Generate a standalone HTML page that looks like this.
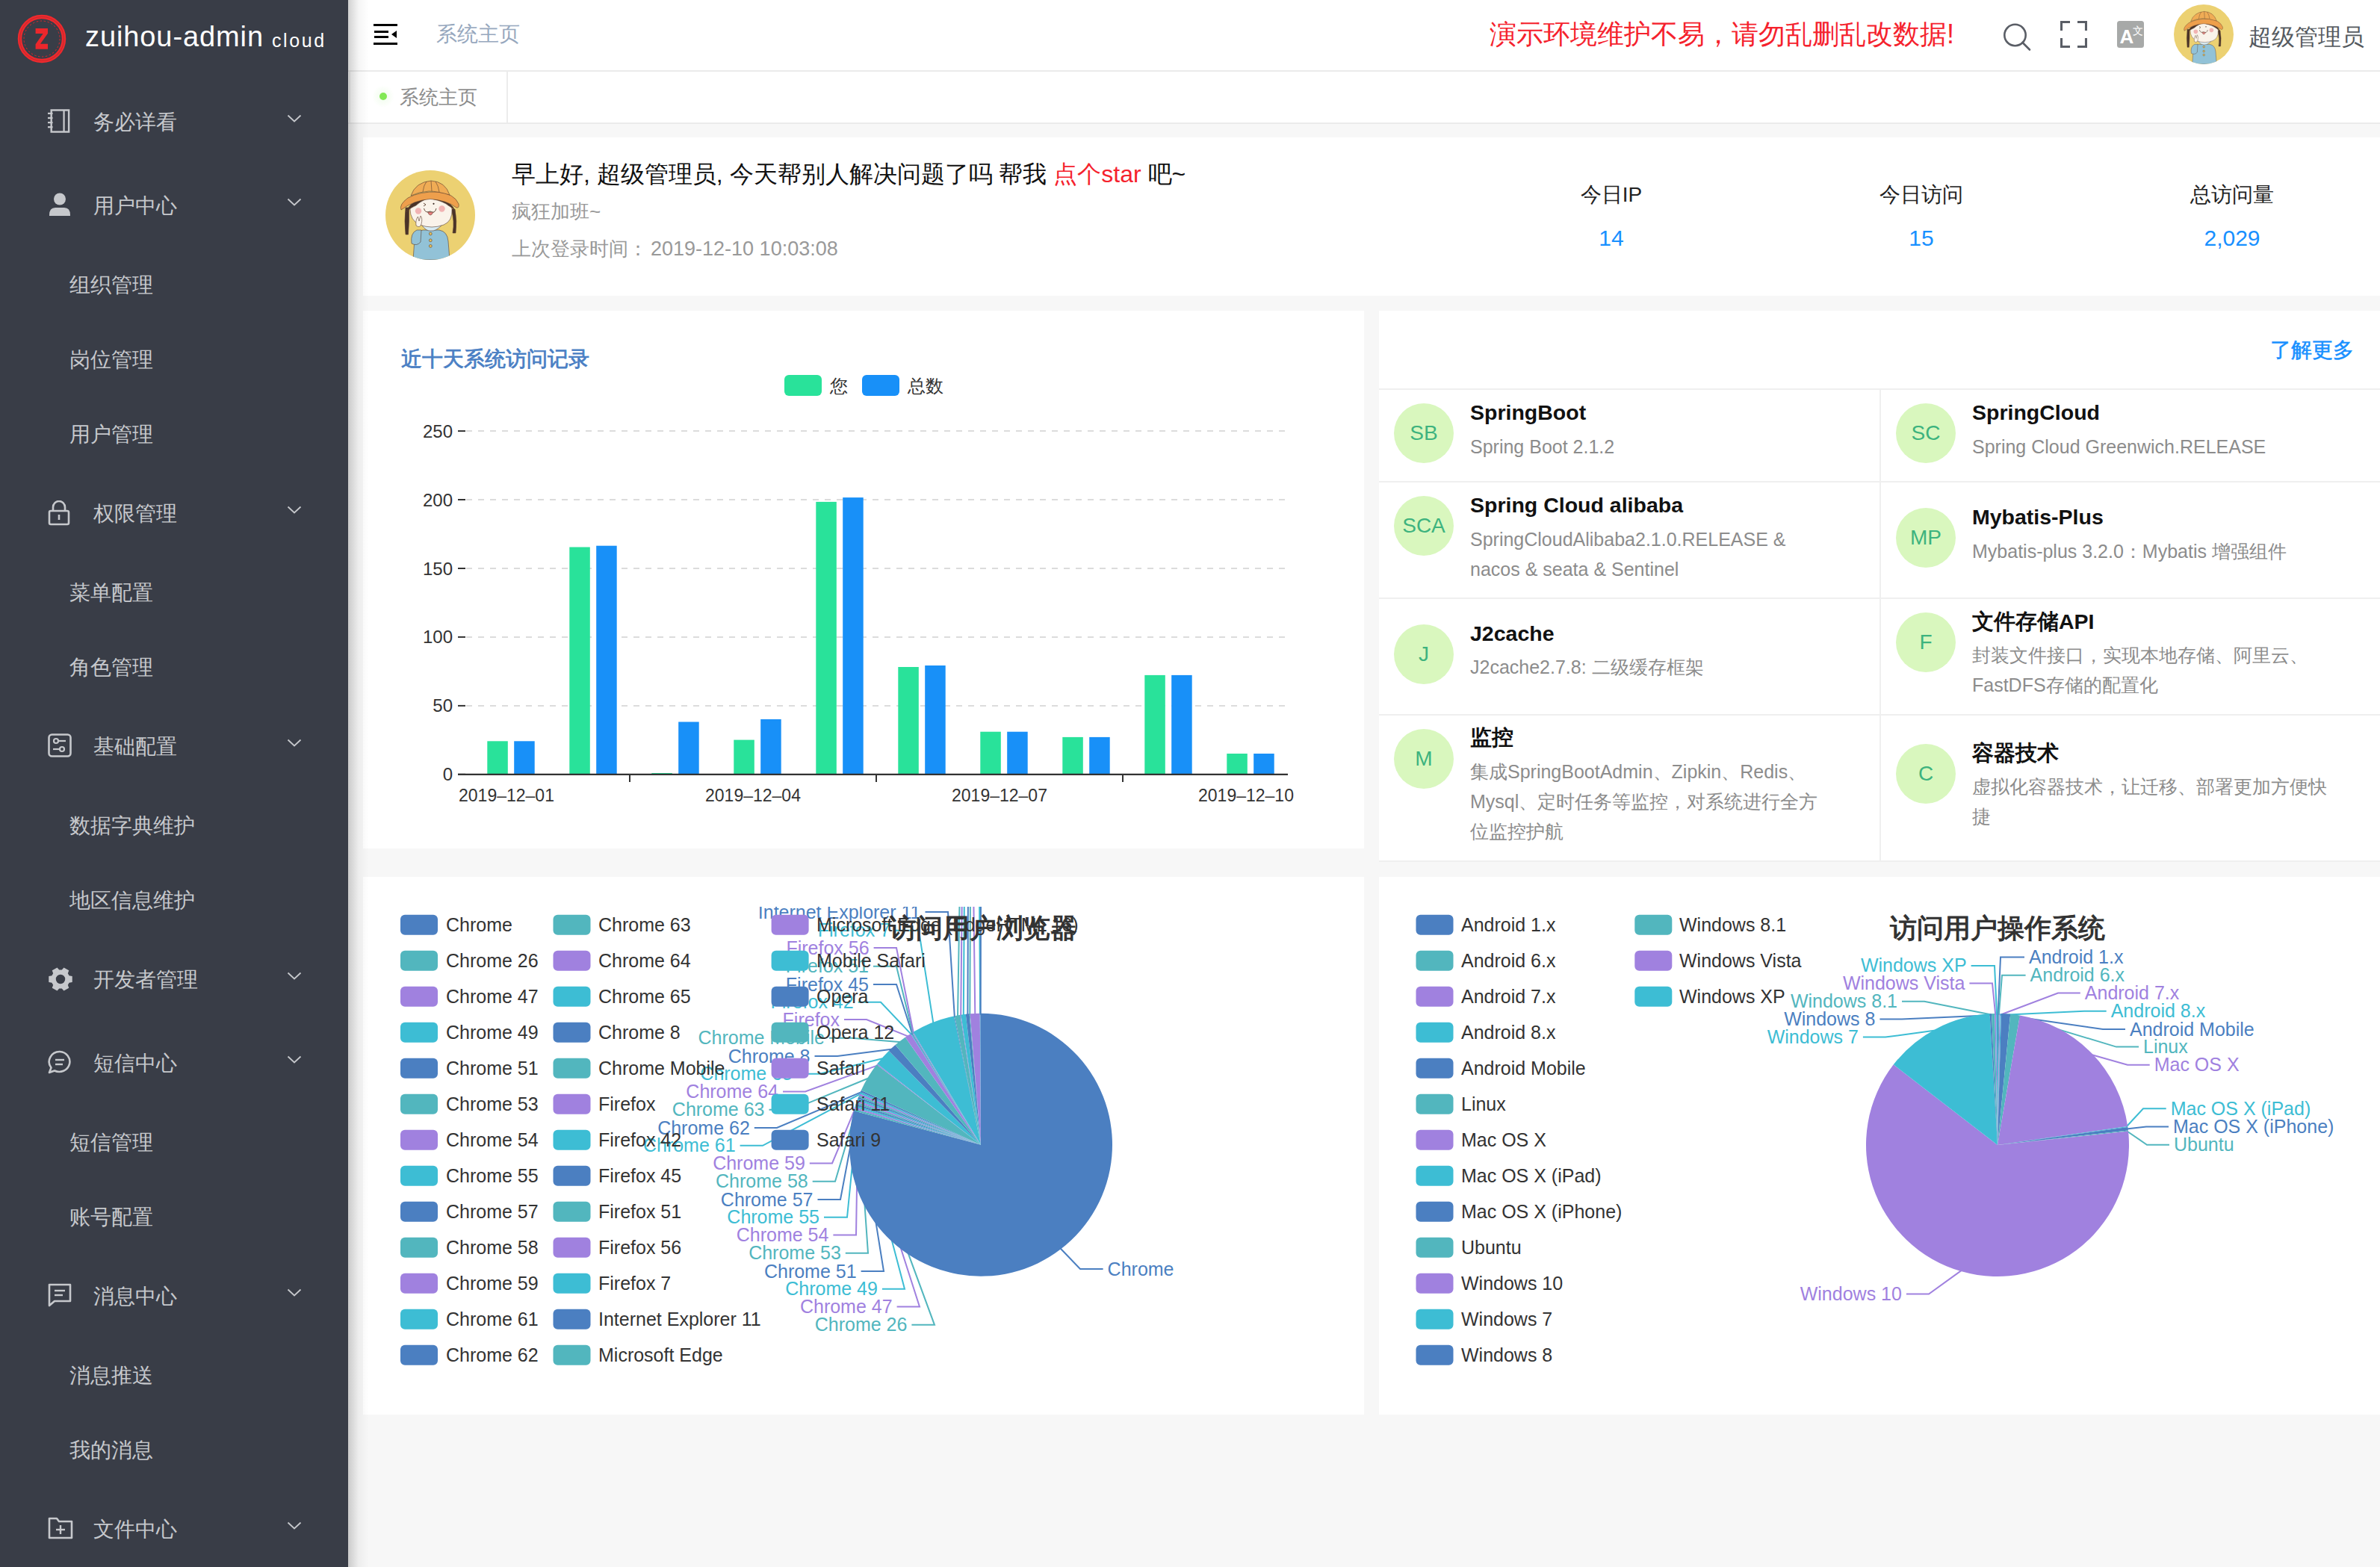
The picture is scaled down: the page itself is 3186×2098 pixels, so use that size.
<!DOCTYPE html><html><head><meta charset="utf-8"><style>
*{box-sizing:border-box;margin:0;padding:0}
html,body{width:3186px;height:2098px;overflow:hidden}
body{position:relative;background:#f7f7f7;font-family:"Liberation Sans",sans-serif;color:#333}
.a{position:absolute;white-space:nowrap}
#side{position:absolute;left:0;top:0;width:466px;height:2098px;background:#393d47;z-index:5}
.mt{position:absolute;color:#c6c8cc;font-size:28px;line-height:28px;white-space:nowrap}
#hdr{position:absolute;left:466px;top:0;width:2720px;height:96px;background:#fff;border-bottom:2px solid #ebebeb}
#tabs{position:absolute;left:466px;top:96px;width:2720px;height:70px;background:#fff;border-bottom:2px solid #ebebeb}
#shadow{position:absolute;left:466px;top:0;width:28px;height:2098px;background:linear-gradient(to right,rgba(0,0,0,.18),rgba(0,0,0,.04) 50%,rgba(0,0,0,0));z-index:4}
.card{position:absolute;background:#fff}
</style></head><body>
<div id="side">
<svg class="a" style="left:0px;top:0px" width="120" height="110" viewBox="0 0 120 110">
<circle cx="56" cy="52" r="29.5" fill="none" stroke="#ee2a2e" stroke-width="5.5"/>
<circle cx="56" cy="52" r="29.5" fill="none" stroke="#b0282c" stroke-width="1.2" opacity=".6"/>
<circle cx="56" cy="52" r="24" fill="none" stroke="#d8282c" stroke-width="1" stroke-dasharray="2.5 2.5"/>
<path d="M47.6 38 H64 V44.8 L54 58.8 H64 V65.7 H47.6 V59.2 L57.6 45 H47.6 Z" fill="#ec272c"/>
</svg>
<div class="a" style="left:114px;top:26px;color:#fff;font-size:38px;line-height:46px;letter-spacing:0.9px">zuihou-admin</div>
<div class="a" style="left:364px;top:39px;color:#fff;font-size:25px;line-height:30px;letter-spacing:2.6px">cloud</div>
<div class="mt" style="left:125px;top:150px">务必详看</div>
<div class="a" style="left:64px;top:146px"><svg width="30" height="32" viewBox="0 0 32 34"><rect x="5" y="1.5" width="25" height="31" fill="none" stroke="#c6c8cc" stroke-width="2.6"/><line x1="23" y1="2" x2="23" y2="32" stroke="#c6c8cc" stroke-width="2.4"/><g fill="#c6c8cc"><rect x="0" y="5" width="7" height="2.4"/><rect x="0" y="11.5" width="7" height="2.4"/><rect x="0" y="18" width="7" height="2.4"/><rect x="0" y="24.5" width="7" height="2.4"/></g></svg></div>
<div class="a" style="left:384px;top:151px"><svg width="20" height="12" viewBox="0 0 20 12"><path d="M1.5 1.5 L10 9.5 L18.5 1.5" fill="none" stroke="#c6c8cc" stroke-width="1.8"/></svg></div>
<div class="mt" style="left:125px;top:262px">用户中心</div>
<div class="a" style="left:64px;top:258px"><svg width="30" height="32" viewBox="0 0 30 32"><circle cx="16" cy="8.5" r="8" fill="#c6c8cc"/><path d="M2 30 Q2 20 10 20 H22 Q30 20 30 30 V31 H2 Z" fill="#c6c8cc"/></svg></div>
<div class="a" style="left:384px;top:263px"><svg width="20" height="12" viewBox="0 0 20 12"><path d="M1.5 1.5 L10 9.5 L18.5 1.5" fill="none" stroke="#c6c8cc" stroke-width="1.8"/></svg></div>
<div class="mt" style="left:93px;top:368px">组织管理</div>
<div class="mt" style="left:93px;top:468px">岗位管理</div>
<div class="mt" style="left:93px;top:568px">用户管理</div>
<div class="mt" style="left:125px;top:674px">权限管理</div>
<div class="a" style="left:64px;top:670px"><svg width="30" height="34" viewBox="0 0 30 34"><path d="M7 14 V9 A8 8 0 0 1 23 9 V14" fill="none" stroke="#c6c8cc" stroke-width="2.6"/><rect x="2" y="14" width="26" height="18" rx="2" fill="none" stroke="#c6c8cc" stroke-width="2.6"/><rect x="13.7" y="19" width="2.6" height="7" fill="#c6c8cc"/></svg></div>
<div class="a" style="left:384px;top:675px"><svg width="20" height="12" viewBox="0 0 20 12"><path d="M1.5 1.5 L10 9.5 L18.5 1.5" fill="none" stroke="#c6c8cc" stroke-width="1.8"/></svg></div>
<div class="mt" style="left:93px;top:780px">菜单配置</div>
<div class="mt" style="left:93px;top:880px">角色管理</div>
<div class="mt" style="left:125px;top:986px">基础配置</div>
<div class="a" style="left:64px;top:982px"><svg width="32" height="32" viewBox="0 0 32 32"><rect x="1.5" y="1.5" width="29" height="29" rx="4" fill="none" stroke="#c6c8cc" stroke-width="2.6"/><circle cx="11" cy="10" r="3" fill="none" stroke="#c6c8cc" stroke-width="2.2"/><circle cx="19" cy="21" r="3" fill="none" stroke="#c6c8cc" stroke-width="2.2"/><line x1="14" y1="10" x2="24" y2="10" stroke="#c6c8cc" stroke-width="2.2"/><line x1="7" y1="21" x2="16" y2="21" stroke="#c6c8cc" stroke-width="2.2"/></svg></div>
<div class="a" style="left:384px;top:987px"><svg width="20" height="12" viewBox="0 0 20 12"><path d="M1.5 1.5 L10 9.5 L18.5 1.5" fill="none" stroke="#c6c8cc" stroke-width="1.8"/></svg></div>
<div class="mt" style="left:93px;top:1092px">数据字典维护</div>
<div class="mt" style="left:93px;top:1192px">地区信息维护</div>
<div class="mt" style="left:125px;top:1298px">开发者管理</div>
<div class="a" style="left:64px;top:1294px"><svg width="34" height="34" viewBox="0 0 34 34"><path fill="#c6c8cc" fill-rule="evenodd" d="M28.59 12.32 L32.72 13.08 L32.72 20.92 L28.59 21.68 L26.85 24.70 L28.25 28.65 L21.47 32.57 L18.74 29.38 L15.26 29.38 L12.53 32.57 L5.75 28.65 L7.15 24.70 L5.41 21.68 L1.28 20.92 L1.28 13.08 L5.41 12.32 L7.15 9.30 L5.75 5.35 L12.53 1.43 L15.26 4.62 L18.74 4.62 L21.47 1.43 L28.25 5.35 L26.85 9.30 Z M23.2 17 A6.2 6.2 0 1 0 10.8 17 A6.2 6.2 0 1 0 23.2 17 Z"/></svg></div>
<div class="a" style="left:384px;top:1299px"><svg width="20" height="12" viewBox="0 0 20 12"><path d="M1.5 1.5 L10 9.5 L18.5 1.5" fill="none" stroke="#c6c8cc" stroke-width="1.8"/></svg></div>
<div class="mt" style="left:125px;top:1410px">短信中心</div>
<div class="a" style="left:64px;top:1406px"><svg width="32" height="32" viewBox="0 0 32 32"><path d="M16 2 A14 13.5 0 1 1 9 27.5 L2 30 L4.5 23.5 A14 13.5 0 0 1 16 2 Z" fill="none" stroke="#c6c8cc" stroke-width="2.6" stroke-linejoin="round"/><line x1="10" y1="13" x2="22" y2="13" stroke="#c6c8cc" stroke-width="2.4"/><line x1="10" y1="19" x2="20" y2="19" stroke="#c6c8cc" stroke-width="2.4"/></svg></div>
<div class="a" style="left:384px;top:1411px"><svg width="20" height="12" viewBox="0 0 20 12"><path d="M1.5 1.5 L10 9.5 L18.5 1.5" fill="none" stroke="#c6c8cc" stroke-width="1.8"/></svg></div>
<div class="mt" style="left:93px;top:1516px">短信管理</div>
<div class="mt" style="left:93px;top:1616px">账号配置</div>
<div class="mt" style="left:125px;top:1722px">消息中心</div>
<div class="a" style="left:64px;top:1718px"><svg width="32" height="32" viewBox="0 0 32 32"><path d="M2 2 H30 V24 H9 L2 30 Z" fill="none" stroke="#c6c8cc" stroke-width="2.6" stroke-linejoin="round"/><line x1="9" y1="10" x2="23" y2="10" stroke="#c6c8cc" stroke-width="2.4"/><line x1="9" y1="16" x2="20" y2="16" stroke="#c6c8cc" stroke-width="2.4"/></svg></div>
<div class="a" style="left:384px;top:1723px"><svg width="20" height="12" viewBox="0 0 20 12"><path d="M1.5 1.5 L10 9.5 L18.5 1.5" fill="none" stroke="#c6c8cc" stroke-width="1.8"/></svg></div>
<div class="mt" style="left:93px;top:1828px">消息推送</div>
<div class="mt" style="left:93px;top:1928px">我的消息</div>
<div class="mt" style="left:125px;top:2034px">文件中心</div>
<div class="a" style="left:64px;top:2030px"><svg width="34" height="32" viewBox="0 0 34 32"><path d="M2 3 H12 L15 7 H32 V29 H2 Z" fill="none" stroke="#c6c8cc" stroke-width="2.6" stroke-linejoin="round"/><line x1="17" y1="12" x2="17" y2="24" stroke="#c6c8cc" stroke-width="2.4"/><line x1="11" y1="18" x2="23" y2="18" stroke="#c6c8cc" stroke-width="2.4"/></svg></div>
<div class="a" style="left:384px;top:2035px"><svg width="20" height="12" viewBox="0 0 20 12"><path d="M1.5 1.5 L10 9.5 L18.5 1.5" fill="none" stroke="#c6c8cc" stroke-width="1.8"/></svg></div>
</div>
<div id="hdr"></div><div id="tabs"></div><div id="shadow"></div>
<svg class="a" style="left:500px;top:32px;z-index:6" width="32" height="28" viewBox="0 0 32 28"><g fill="#000"><rect x="0" y="0" width="32" height="3"/><rect x="1" y="9" width="19" height="3"/><rect x="1" y="16" width="19" height="3"/><rect x="0" y="25" width="32" height="3"/><path d="M24 14 L31 9 V19 Z"/></g></svg>
<div class="a" style="left:584px;top:32px;font-size:28px;line-height:28px;color:#97a8be;z-index:6">系统主页</div>
<div class="a" style="left:1994px;top:28px;font-size:36px;line-height:36px;color:#f5222d;z-index:6">演示环境维护不易，请勿乱删乱改数据!</div>
<svg class="a" style="left:2680px;top:30px;z-index:6" width="42" height="40" viewBox="0 0 42 40"><circle cx="17.5" cy="17" r="14.2" fill="none" stroke="#5a5e66" stroke-width="2.6"/><line x1="27.5" y1="27" x2="37" y2="36.5" stroke="#5a5e66" stroke-width="2.6" stroke-linecap="round"/></svg>
<svg class="a" style="left:2758px;top:28px;z-index:6" width="36" height="36" viewBox="0 0 36 36"><g fill="none" stroke="#5a5e66" stroke-width="3.1"><path d="M1.5 13 V1.5 H13"/><path d="M23 1.5 H34.5 V13"/><path d="M34.5 23 V34.5 H23"/><path d="M13 34.5 H1.5 V23"/></g></svg>
<svg class="a" style="left:2834px;top:28px;z-index:6" width="36" height="36" viewBox="0 0 36 36"><rect x="0" y="0" width="36" height="36" rx="3.5" fill="#a7a9a8"/><text x="3.5" y="29.5" font-family="Liberation Sans" font-weight="bold" font-size="26" fill="#fff">A</text><text x="20.5" y="18" font-size="13.5" fill="#fff">文</text></svg>
<svg class="a"  style="z-index:6;left:2910.0px;top:6.0px" width="80" height="80" viewBox="0 0 120 120">
<defs><clipPath id="cp2950"><circle cx="60" cy="60" r="60"/></clipPath></defs>
<circle cx="60" cy="60" r="60" fill="#ecd172"/>
<g clip-path="url(#cp2950)" stroke="#5a4030" stroke-width="0.6">
<path d="M27 50 Q25 68 27 86 L30.5 86 Q32 68 31.5 50Z" fill="#4a3328"/>
<path d="M88 52 Q93 68 90 84 L94 84 Q96 68 93 52Z" fill="#4a3328"/>
<path d="M37 120 L39 92 Q40 82 50 80 H72 Q83 82 84 95 L86 120Z" fill="#92c2d7"/>
<path d="M35 98 Q33 84 42 80 L48 80 L47 96 Q42 102 35 98Z" fill="#92c2d7"/>
<path d="M49 74 Q55 82 61 81 Q67 82 75 74 L73 72 H51Z" fill="#d7ebf4"/>
<circle cx="60.3" cy="85" r="1.9" fill="#e9c35d"/><circle cx="60.3" cy="93.8" r="1.9" fill="#e9c35d"/><circle cx="60.3" cy="101.4" r="1.9" fill="#e9c35d"/>
<path d="M33 52 Q33 36 60 34 Q88 36 89 52 Q90 68 78 73 Q62 79 46 73 Q33 67 33 52Z" fill="#faf3ea"/>
<path d="M28 56 Q32 41 54 38.6 Q45 43 41 47 Q33 50 28 56Z" fill="#4a3328"/><path d="M93 55 Q90 41 64 38.6 Q78 42 84 47 Q90 50 93 55Z" fill="#4a3328"/>
<path d="M21 53 Q18 46 30 37 Q46 28 70 29 Q92 31 98 45 Q99 51 95 50 Q82 40 60 38.5 Q38 40 21 53Z" fill="#ee9f4c"/>
<path d="M34 34 Q40 16 61 14 Q80 15 86 33 Q70 28 58 28 Q44 29 34 34Z" fill="#f0ac55"/>
<path d="M50 29 Q51 20 55 15 M62 28 L61 14 M72 29 Q71 21 67 15" fill="none"/>
<circle cx="44" cy="54.5" r="4.2" fill="#f1b3b3" stroke="none"/><circle cx="75.5" cy="51.5" r="4.2" fill="#f1b3b3" stroke="none"/>
<path d="M51 44 L54 46 L51 48" fill="none" stroke-width="0.9"/><circle cx="64.5" cy="44.8" r="1.1" fill="#3a2a22" stroke="none"/>
<path d="M51.5 51 Q53 58 60 55 Q66 59 68 51" fill="none" stroke-width="0.9"/>
<path d="M56.5 56 Q60 64 64 56Z" fill="#ec8080" stroke-width="0.6"/>
<path d="M41 74 Q40 66 43.5 62 L45 68 L47 61 Q50 64 48 72 Q46 78 41 74Z" fill="#faf3ea"/>
</g></svg>
<div class="a" style="left:3010px;top:34px;font-size:31px;line-height:32px;color:#555a60;z-index:6">超级管理员</div>
<div class="a" style="left:467px;top:96px;width:2px;height:68px;background:rgba(0,0,0,.06);z-index:6"></div>
<div class="a" style="left:498px;top:114px;width:30px;height:30px;border-radius:50%;background:radial-gradient(circle,rgba(126,232,85,.12),rgba(126,232,85,0) 70%);z-index:6"></div>
<div class="a" style="left:508px;top:124px;width:10px;height:10px;border-radius:50%;background:#82e855;z-index:6"></div>
<div class="a" style="left:535px;top:117px;font-size:26px;line-height:26px;color:#8c8c8c;z-index:6">系统主页</div>
<div class="a" style="left:678px;top:96px;width:2px;height:68px;background:#ececec;z-index:6"></div>
<div class="card" style="left:486px;top:184px;width:2700px;height:212px"></div>
<svg class="a" style="left:516.0px;top:228.0px" width="120" height="120" viewBox="0 0 120 120">
<defs><clipPath id="cp576"><circle cx="60" cy="60" r="60"/></clipPath></defs>
<circle cx="60" cy="60" r="60" fill="#ecd172"/>
<g clip-path="url(#cp576)" stroke="#5a4030" stroke-width="0.6">
<path d="M27 50 Q25 68 27 86 L30.5 86 Q32 68 31.5 50Z" fill="#4a3328"/>
<path d="M88 52 Q93 68 90 84 L94 84 Q96 68 93 52Z" fill="#4a3328"/>
<path d="M37 120 L39 92 Q40 82 50 80 H72 Q83 82 84 95 L86 120Z" fill="#92c2d7"/>
<path d="M35 98 Q33 84 42 80 L48 80 L47 96 Q42 102 35 98Z" fill="#92c2d7"/>
<path d="M49 74 Q55 82 61 81 Q67 82 75 74 L73 72 H51Z" fill="#d7ebf4"/>
<circle cx="60.3" cy="85" r="1.9" fill="#e9c35d"/><circle cx="60.3" cy="93.8" r="1.9" fill="#e9c35d"/><circle cx="60.3" cy="101.4" r="1.9" fill="#e9c35d"/>
<path d="M33 52 Q33 36 60 34 Q88 36 89 52 Q90 68 78 73 Q62 79 46 73 Q33 67 33 52Z" fill="#faf3ea"/>
<path d="M28 56 Q32 41 54 38.6 Q45 43 41 47 Q33 50 28 56Z" fill="#4a3328"/><path d="M93 55 Q90 41 64 38.6 Q78 42 84 47 Q90 50 93 55Z" fill="#4a3328"/>
<path d="M21 53 Q18 46 30 37 Q46 28 70 29 Q92 31 98 45 Q99 51 95 50 Q82 40 60 38.5 Q38 40 21 53Z" fill="#ee9f4c"/>
<path d="M34 34 Q40 16 61 14 Q80 15 86 33 Q70 28 58 28 Q44 29 34 34Z" fill="#f0ac55"/>
<path d="M50 29 Q51 20 55 15 M62 28 L61 14 M72 29 Q71 21 67 15" fill="none"/>
<circle cx="44" cy="54.5" r="4.2" fill="#f1b3b3" stroke="none"/><circle cx="75.5" cy="51.5" r="4.2" fill="#f1b3b3" stroke="none"/>
<path d="M51 44 L54 46 L51 48" fill="none" stroke-width="0.9"/><circle cx="64.5" cy="44.8" r="1.1" fill="#3a2a22" stroke="none"/>
<path d="M51.5 51 Q53 58 60 55 Q66 59 68 51" fill="none" stroke-width="0.9"/>
<path d="M56.5 56 Q60 64 64 56Z" fill="#ec8080" stroke-width="0.6"/>
<path d="M41 74 Q40 66 43.5 62 L45 68 L47 61 Q50 64 48 72 Q46 78 41 74Z" fill="#faf3ea"/>
</g></svg>
<div class="a" style="left:685px;top:217px;font-size:32px;line-height:32px;color:#111">早上好, 超级管理员, 今天帮别人解决问题了吗 帮我 <span style="color:#f5222d">点个star</span> 吧~</div>
<div class="a" style="left:685px;top:270px;font-size:26px;line-height:27px;color:#999">疯狂加班~</div>
<div class="a" style="left:685px;top:320px;font-size:26px;line-height:27px;color:#999">上次登录时间：</div>
<div class="a" style="left:871px;top:320px;font-size:27px;line-height:27px;color:#999">2019-12-10 10:03:08</div>
<div class="a" style="left:2007px;top:247px;width:300px;text-align:center;font-size:28px;line-height:28px;color:#222">今日IP</div>
<div class="a" style="left:2007px;top:304px;width:300px;text-align:center;font-size:30px;line-height:30px;color:#1890ff">14</div>
<div class="a" style="left:2422px;top:247px;width:300px;text-align:center;font-size:28px;line-height:28px;color:#222">今日访问</div>
<div class="a" style="left:2422px;top:304px;width:300px;text-align:center;font-size:30px;line-height:30px;color:#1890ff">15</div>
<div class="a" style="left:2838px;top:247px;width:300px;text-align:center;font-size:28px;line-height:28px;color:#222">总访问量</div>
<div class="a" style="left:2838px;top:304px;width:300px;text-align:center;font-size:30px;line-height:30px;color:#1890ff">2,029</div>
<div class="card" style="left:486px;top:416px;width:1340px;height:720px"></div>
<div class="card" style="left:1846px;top:416px;width:1340px;height:738px"></div>
<div class="card" style="left:486px;top:1174px;width:1340px;height:720px"></div>
<div class="card" style="left:1846px;top:1174px;width:1340px;height:720px"></div>
<svg class="a" style="left:0;top:0" width="3186" height="2098" viewBox="0 0 3186 2098" font-family="Liberation Sans">
<text x="537" y="490" font-size="28" fill="#4a7fc4" stroke="#4a7fc4" stroke-width="0.8">近十天系统访问记录</text>
<rect x="1050" y="502" width="50" height="28" rx="6" fill="#29e29a"/>
<text x="1111" y="525" font-size="24" fill="#333">您</text>
<rect x="1154" y="502" width="50" height="28" rx="6" fill="#1890f8"/>
<text x="1215" y="525" font-size="24" fill="#333">总数</text>
<line x1="624" y1="944.9" x2="1720" y2="944.9" stroke="#dcdcdc" stroke-width="2" stroke-dasharray="8 8"/>
<line x1="624" y1="852.9" x2="1720" y2="852.9" stroke="#dcdcdc" stroke-width="2" stroke-dasharray="8 8"/>
<line x1="624" y1="761.0" x2="1720" y2="761.0" stroke="#dcdcdc" stroke-width="2" stroke-dasharray="8 8"/>
<line x1="624" y1="669.0" x2="1720" y2="669.0" stroke="#dcdcdc" stroke-width="2" stroke-dasharray="8 8"/>
<line x1="624" y1="577.1" x2="1720" y2="577.1" stroke="#dcdcdc" stroke-width="2" stroke-dasharray="8 8"/>
<line x1="613" y1="1036.8" x2="623" y2="1036.8" stroke="#333" stroke-width="2"/>
<text x="606" y="1045.3" font-size="24" fill="#333" text-anchor="end">0</text>
<line x1="613" y1="944.9" x2="623" y2="944.9" stroke="#333" stroke-width="2"/>
<text x="606" y="953.4" font-size="24" fill="#333" text-anchor="end">50</text>
<line x1="613" y1="852.9" x2="623" y2="852.9" stroke="#333" stroke-width="2"/>
<text x="606" y="861.4" font-size="24" fill="#333" text-anchor="end">100</text>
<line x1="613" y1="761.0" x2="623" y2="761.0" stroke="#333" stroke-width="2"/>
<text x="606" y="769.5" font-size="24" fill="#333" text-anchor="end">150</text>
<line x1="613" y1="669.0" x2="623" y2="669.0" stroke="#333" stroke-width="2"/>
<text x="606" y="677.5" font-size="24" fill="#333" text-anchor="end">200</text>
<line x1="613" y1="577.1" x2="623" y2="577.1" stroke="#333" stroke-width="2"/>
<text x="606" y="585.6" font-size="24" fill="#333" text-anchor="end">250</text>
<rect x="652.3" y="992.3" width="27.5" height="44.5" fill="#29e29a"/>
<rect x="688.2" y="992.3" width="27.5" height="44.5" fill="#1890f8"/>
<rect x="762.3" y="732.5" width="27.5" height="304.3" fill="#29e29a"/>
<rect x="798.2" y="730.7" width="27.5" height="306.1" fill="#1890f8"/>
<rect x="872.3" y="1035.0" width="27.5" height="1.8" fill="#29e29a"/>
<rect x="908.2" y="966.5" width="27.5" height="70.3" fill="#1890f8"/>
<rect x="982.3" y="990.6" width="27.5" height="46.2" fill="#29e29a"/>
<rect x="1018.2" y="963.0" width="27.5" height="73.8" fill="#1890f8"/>
<rect x="1092.3" y="671.9" width="27.5" height="364.9" fill="#29e29a"/>
<rect x="1128.2" y="666.1" width="27.5" height="370.7" fill="#1890f8"/>
<rect x="1202.3" y="893.0" width="27.5" height="143.8" fill="#29e29a"/>
<rect x="1238.2" y="891.0" width="27.5" height="145.8" fill="#1890f8"/>
<rect x="1312.3" y="979.7" width="27.5" height="57.1" fill="#29e29a"/>
<rect x="1348.2" y="979.7" width="27.5" height="57.1" fill="#1890f8"/>
<rect x="1422.3" y="986.9" width="27.5" height="49.9" fill="#29e29a"/>
<rect x="1458.2" y="986.9" width="27.5" height="49.9" fill="#1890f8"/>
<rect x="1532.3" y="903.9" width="27.5" height="132.9" fill="#29e29a"/>
<rect x="1568.2" y="903.9" width="27.5" height="132.9" fill="#1890f8"/>
<rect x="1642.3" y="1009.0" width="27.5" height="27.8" fill="#29e29a"/>
<rect x="1678.2" y="1009.0" width="27.5" height="27.8" fill="#1890f8"/>
<line x1="613" y1="1036.8" x2="1724" y2="1036.8" stroke="#333" stroke-width="2.2"/>
<line x1="843" y1="1036" x2="843" y2="1047" stroke="#333" stroke-width="2"/>
<line x1="1173" y1="1036" x2="1173" y2="1047" stroke="#333" stroke-width="2"/>
<line x1="1503" y1="1036" x2="1503" y2="1047" stroke="#333" stroke-width="2"/>
<text x="678" y="1073" font-size="23" fill="#333" text-anchor="middle">2019–12–01</text>
<text x="1008" y="1073" font-size="23" fill="#333" text-anchor="middle">2019–12–04</text>
<text x="1338" y="1073" font-size="23" fill="#333" text-anchor="middle">2019–12–07</text>
<text x="1668" y="1073" font-size="23" fill="#333" text-anchor="middle">2019–12–10</text>
<clipPath id="clip1313"><rect x="526" y="1214" width="1260" height="640"/></clipPath>
<g clip-path="url(#clip1313)">
<polyline points="1418.9,1670.7 1446.0,1699.0 1476.6,1699.0" fill="none" stroke="#4b7fc1" stroke-width="2"/>
<polyline points="1145.2,1486.5 1251.0,1773.8 1220.4,1773.8" fill="none" stroke="#52b6be" stroke-width="2"/>
<polyline points="1145.9,1484.2 1231.0,1749.5 1200.6,1749.5" fill="none" stroke="#a081df" stroke-width="2"/>
<polyline points="1146.6,1481.9 1211.0,1725.8 1180.9,1725.8" fill="none" stroke="#3dbdd4" stroke-width="2"/>
<polyline points="1147.3,1479.6 1183.0,1702.0 1152.6,1702.0" fill="none" stroke="#4b7fc1" stroke-width="2"/>
<polyline points="1148.1,1477.3 1162.0,1677.8 1131.8,1677.8" fill="none" stroke="#52b6be" stroke-width="2"/>
<polyline points="1148.8,1475.0 1146.0,1653.5 1115.4,1653.5" fill="none" stroke="#a081df" stroke-width="2"/>
<polyline points="1149.6,1472.8 1134.0,1629.8 1103.0,1629.8" fill="none" stroke="#3dbdd4" stroke-width="2"/>
<polyline points="1150.5,1470.5 1125.0,1606.0 1094.5,1606.0" fill="none" stroke="#4b7fc1" stroke-width="2"/>
<polyline points="1151.4,1468.3 1118.0,1581.8 1087.7,1581.8" fill="none" stroke="#52b6be" stroke-width="2"/>
<polyline points="1152.3,1466.1 1114.0,1557.5 1083.8,1557.5" fill="none" stroke="#a081df" stroke-width="2"/>
<polyline points="1153.2,1463.8 1021.0,1533.8 990.6,1533.8" fill="none" stroke="#3dbdd4" stroke-width="2"/>
<polyline points="1154.2,1461.6 1040.0,1510.0 1009.8,1510.0" fill="none" stroke="#4b7fc1" stroke-width="2"/>
<polyline points="1163.9,1443.0 1060.0,1485.8 1029.5,1485.8" fill="none" stroke="#52b6be" stroke-width="2"/>
<polyline points="1175.5,1426.1 1078.0,1461.5 1048.0,1461.5" fill="none" stroke="#a081df" stroke-width="2"/>
<polyline points="1183.3,1416.7 1097.0,1437.8 1067.0,1437.8" fill="none" stroke="#3dbdd4" stroke-width="2"/>
<polyline points="1195.4,1404.4 1121.0,1414.0 1090.5,1414.0" fill="none" stroke="#4b7fc1" stroke-width="2"/>
<polyline points="1206.2,1395.3 1140.0,1389.8 1110.0,1389.8" fill="none" stroke="#52b6be" stroke-width="2"/>
<polyline points="1216.5,1387.9 1160.0,1365.0 1130.0,1365.0" fill="none" stroke="#a081df" stroke-width="2"/>
<polyline points="1220.4,1385.4 1179.0,1341.8 1148.7,1341.8" fill="none" stroke="#3dbdd4" stroke-width="2"/>
<polyline points="1221.3,1384.8 1200.0,1318.0 1169.0,1318.0" fill="none" stroke="#4b7fc1" stroke-width="2"/>
<polyline points="1222.1,1384.3 1200.0,1293.8 1169.0,1293.8" fill="none" stroke="#52b6be" stroke-width="2"/>
<polyline points="1223.0,1383.8 1200.0,1269.0 1169.6,1269.0" fill="none" stroke="#a081df" stroke-width="2"/>
<polyline points="1249.5,1370.7 1230.0,1245.8 1198.0,1245.8" fill="none" stroke="#3dbdd4" stroke-width="2"/>
<polyline points="1277.9,1362.3 1269.0,1221.0 1238.5,1221.0" fill="none" stroke="#4b7fc1" stroke-width="2"/>
<polyline points="1282.0,1361.5 1285.0,1180.0 1251.0,1180.0" fill="none" stroke="#52b6be" stroke-width="2"/>
<polyline points="1286.2,1360.8 1288.0,1180.0 1254.0,1180.0" fill="none" stroke="#a081df" stroke-width="2"/>
<polyline points="1289.8,1360.2 1291.0,1180.0 1257.0,1180.0" fill="none" stroke="#3dbdd4" stroke-width="2"/>
<polyline points="1295.4,1359.6 1296.0,1180.0 1262.0,1180.0" fill="none" stroke="#4b7fc1" stroke-width="2"/>
<polyline points="1298.3,1359.3 1299.0,1180.0 1265.0,1180.0" fill="none" stroke="#52b6be" stroke-width="2"/>
<polyline points="1305.3,1358.9 1303.0,1180.0 1269.0,1180.0" fill="none" stroke="#a081df" stroke-width="2"/>
<polyline points="1312.1,1358.7 1311.0,1180.0 1277.0,1180.0" fill="none" stroke="#3dbdd4" stroke-width="2"/>
<polyline points="1312.7,1358.7 1313.0,1180.0 1279.0,1180.0" fill="none" stroke="#4b7fc1" stroke-width="2"/>
<path d="M1313,1532.7 L1313.00,1356.70 A176,176 0 1 1 1143.00,1487.15 Z" fill="#4b7fc1"/>
<path d="M1313,1532.7 L1143.00,1487.15 A176,176 0 0 1 1143.64,1484.80 Z" fill="#52b6be"/>
<path d="M1313,1532.7 L1143.64,1484.80 A176,176 0 0 1 1144.32,1482.47 Z" fill="#a081df"/>
<path d="M1313,1532.7 L1144.32,1482.47 A176,176 0 0 1 1145.03,1480.14 Z" fill="#3dbdd4"/>
<path d="M1313,1532.7 L1145.03,1480.14 A176,176 0 0 1 1145.77,1477.83 Z" fill="#4b7fc1"/>
<path d="M1313,1532.7 L1145.77,1477.83 A176,176 0 0 1 1146.55,1475.52 Z" fill="#52b6be"/>
<path d="M1313,1532.7 L1146.55,1475.52 A176,176 0 0 1 1147.35,1473.23 Z" fill="#a081df"/>
<path d="M1313,1532.7 L1147.35,1473.23 A176,176 0 0 1 1148.19,1470.94 Z" fill="#3dbdd4"/>
<path d="M1313,1532.7 L1148.19,1470.94 A176,176 0 0 1 1149.06,1468.67 Z" fill="#4b7fc1"/>
<path d="M1313,1532.7 L1149.06,1468.67 A176,176 0 0 1 1149.96,1466.41 Z" fill="#52b6be"/>
<path d="M1313,1532.7 L1149.96,1466.41 A176,176 0 0 1 1150.89,1464.17 Z" fill="#a081df"/>
<path d="M1313,1532.7 L1150.89,1464.17 A176,176 0 0 1 1151.85,1461.93 Z" fill="#3dbdd4"/>
<path d="M1313,1532.7 L1151.85,1461.93 A176,176 0 0 1 1152.85,1459.71 Z" fill="#4b7fc1"/>
<path d="M1313,1532.7 L1152.85,1459.71 A176,176 0 0 1 1173.56,1425.31 Z" fill="#52b6be"/>
<path d="M1313,1532.7 L1173.56,1425.31 A176,176 0 0 1 1174.31,1424.34 Z" fill="#a081df"/>
<path d="M1313,1532.7 L1174.31,1424.34 A176,176 0 0 1 1189.86,1406.95 Z" fill="#3dbdd4"/>
<path d="M1313,1532.7 L1189.86,1406.95 A176,176 0 0 1 1198.46,1399.07 Z" fill="#4b7fc1"/>
<path d="M1313,1532.7 L1198.46,1399.07 A176,176 0 0 1 1211.80,1388.71 Z" fill="#52b6be"/>
<path d="M1313,1532.7 L1211.80,1388.71 A176,176 0 0 1 1218.95,1383.93 Z" fill="#a081df"/>
<path d="M1313,1532.7 L1218.95,1383.93 A176,176 0 0 1 1219.81,1383.39 Z" fill="#3dbdd4"/>
<path d="M1313,1532.7 L1219.81,1383.39 A176,176 0 0 1 1220.67,1382.86 Z" fill="#4b7fc1"/>
<path d="M1313,1532.7 L1220.67,1382.86 A176,176 0 0 1 1221.54,1382.33 Z" fill="#52b6be"/>
<path d="M1313,1532.7 L1221.54,1382.33 A176,176 0 0 1 1222.41,1381.81 Z" fill="#a081df"/>
<path d="M1313,1532.7 L1222.35,1381.84 A176,176 0 0 1 1277.01,1360.42 Z" fill="#3dbdd4"/>
<path d="M1313,1532.7 L1277.01,1360.42 A176,176 0 0 1 1277.91,1360.23 Z" fill="#4b7fc1"/>
<path d="M1313,1532.7 L1277.91,1360.23 A176,176 0 0 1 1285.47,1358.87 Z" fill="#52b6be"/>
<path d="M1313,1532.7 L1285.47,1358.87 A176,176 0 0 1 1286.38,1358.73 Z" fill="#a081df"/>
<path d="M1313,1532.7 L1286.38,1358.73 A176,176 0 0 1 1292.77,1357.87 Z" fill="#3dbdd4"/>
<path d="M1313,1532.7 L1292.77,1357.87 A176,176 0 0 1 1297.66,1357.37 Z" fill="#4b7fc1"/>
<path d="M1313,1532.7 L1297.66,1357.37 A176,176 0 0 1 1298.58,1357.29 Z" fill="#52b6be"/>
<path d="M1313,1532.7 L1298.58,1357.29 A176,176 0 0 1 1311.77,1356.70 Z" fill="#a081df"/>
<path d="M1313,1532.7 L1311.77,1356.70 A176,176 0 0 1 1312.39,1356.70 Z" fill="#3dbdd4"/>
<path d="M1313,1532.7 L1312.39,1356.70 A176,176 0 0 1 1313.00,1356.70 Z" fill="#4b7fc1"/>
<text x="1482.6" y="1707.5" font-size="25" fill="#4b7fc1" text-anchor="start">Chrome</text>
<text x="1214.4" y="1782.3" font-size="25" fill="#52b6be" text-anchor="end">Chrome 26</text>
<text x="1194.6" y="1758.0" font-size="25" fill="#a081df" text-anchor="end">Chrome 47</text>
<text x="1174.9" y="1734.3" font-size="25" fill="#3dbdd4" text-anchor="end">Chrome 49</text>
<text x="1146.6" y="1710.5" font-size="25" fill="#4b7fc1" text-anchor="end">Chrome 51</text>
<text x="1125.8" y="1686.3" font-size="25" fill="#52b6be" text-anchor="end">Chrome 53</text>
<text x="1109.4" y="1662.0" font-size="25" fill="#a081df" text-anchor="end">Chrome 54</text>
<text x="1097.0" y="1638.3" font-size="25" fill="#3dbdd4" text-anchor="end">Chrome 55</text>
<text x="1088.5" y="1614.5" font-size="25" fill="#4b7fc1" text-anchor="end">Chrome 57</text>
<text x="1081.7" y="1590.3" font-size="25" fill="#52b6be" text-anchor="end">Chrome 58</text>
<text x="1077.8" y="1566.0" font-size="25" fill="#a081df" text-anchor="end">Chrome 59</text>
<text x="984.6" y="1542.3" font-size="25" fill="#3dbdd4" text-anchor="end">Chrome 61</text>
<text x="1003.8" y="1518.5" font-size="25" fill="#4b7fc1" text-anchor="end">Chrome 62</text>
<text x="1023.5" y="1494.3" font-size="25" fill="#52b6be" text-anchor="end">Chrome 63</text>
<text x="1042.0" y="1470.0" font-size="25" fill="#a081df" text-anchor="end">Chrome 64</text>
<text x="1061.0" y="1446.3" font-size="25" fill="#3dbdd4" text-anchor="end">Chrome 65</text>
<text x="1084.5" y="1422.5" font-size="25" fill="#4b7fc1" text-anchor="end">Chrome 8</text>
<text x="1104.0" y="1398.3" font-size="25" fill="#52b6be" text-anchor="end">Chrome Mobile</text>
<text x="1124.0" y="1373.5" font-size="25" fill="#a081df" text-anchor="end">Firefox</text>
<text x="1142.7" y="1350.3" font-size="25" fill="#3dbdd4" text-anchor="end">Firefox 42</text>
<text x="1163.0" y="1326.5" font-size="25" fill="#4b7fc1" text-anchor="end">Firefox 45</text>
<text x="1163.0" y="1302.3" font-size="25" fill="#52b6be" text-anchor="end">Firefox 51</text>
<text x="1163.6" y="1277.5" font-size="25" fill="#a081df" text-anchor="end">Firefox 56</text>
<text x="1192.0" y="1254.3" font-size="25" fill="#3dbdd4" text-anchor="end">Firefox 7</text>
<text x="1232.5" y="1229.5" font-size="25" fill="#4b7fc1" text-anchor="end">Internet Explorer 11</text>
</g>
<clipPath id="clip2674"><rect x="1886" y="1214" width="1260" height="640"/></clipPath>
<g clip-path="url(#clip2674)">
<polyline points="2674.6,1359.0 2678.0,1281.6 2710.0,1281.6" fill="none" stroke="#4b7fc1" stroke-width="2"/>
<polyline points="2675.8,1359.0 2680.0,1305.8 2711.6,1305.8" fill="none" stroke="#52b6be" stroke-width="2"/>
<polyline points="2677.0,1359.0 2755.0,1329.5 2784.8,1329.5" fill="none" stroke="#a081df" stroke-width="2"/>
<polyline points="2678.3,1359.1 2790.0,1353.7 2819.7,1353.7" fill="none" stroke="#3dbdd4" stroke-width="2"/>
<polyline points="2684.9,1359.3 2815.0,1378.0 2845.0,1378.0" fill="none" stroke="#4b7fc1" stroke-width="2"/>
<polyline points="2697.3,1360.6 2833.0,1401.6 2863.0,1401.6" fill="none" stroke="#52b6be" stroke-width="2"/>
<polyline points="2798.7,1411.7 2848.0,1425.8 2877.7,1425.8" fill="none" stroke="#a081df" stroke-width="2"/>
<polyline points="2846.3,1508.8 2869.0,1484.3 2899.7,1484.3" fill="none" stroke="#3dbdd4" stroke-width="2"/>
<polyline points="2846.7,1511.5 2873.0,1508.5 2903.0,1508.5" fill="none" stroke="#4b7fc1" stroke-width="2"/>
<polyline points="2847.0,1514.2 2874.0,1532.7 2904.0,1532.7" fill="none" stroke="#52b6be" stroke-width="2"/>
<polyline points="2626.5,1700.4 2582.0,1732.6 2551.9,1732.6" fill="none" stroke="#a081df" stroke-width="2"/>
<polyline points="2592.7,1379.2 2524.0,1388.6 2493.9,1388.6" fill="none" stroke="#3dbdd4" stroke-width="2"/>
<polyline points="2664.9,1359.2 2546.0,1364.4 2516.4,1364.4" fill="none" stroke="#4b7fc1" stroke-width="2"/>
<polyline points="2668.2,1359.1 2576.0,1340.7 2546.0,1340.7" fill="none" stroke="#52b6be" stroke-width="2"/>
<polyline points="2671.3,1359.0 2667.0,1316.5 2636.4,1316.5" fill="none" stroke="#a081df" stroke-width="2"/>
<polyline points="2673.1,1359.0 2670.0,1292.9 2638.6,1292.9" fill="none" stroke="#3dbdd4" stroke-width="2"/>
<path d="M2674,1533 L2674.00,1357.00 A176,176 0 0 1 2675.23,1357.00 Z" fill="#4b7fc1"/>
<path d="M2674,1533 L2675.23,1357.00 A176,176 0 0 1 2676.46,1357.02 Z" fill="#52b6be"/>
<path d="M2674,1533 L2676.46,1357.02 A176,176 0 0 1 2677.69,1357.04 Z" fill="#a081df"/>
<path d="M2674,1533 L2677.69,1357.04 A176,176 0 0 1 2678.91,1357.07 Z" fill="#3dbdd4"/>
<path d="M2674,1533 L2678.91,1357.07 A176,176 0 0 1 2691.17,1357.84 Z" fill="#4b7fc1"/>
<path d="M2674,1533 L2691.17,1357.84 A176,176 0 0 1 2703.96,1359.57 Z" fill="#52b6be"/>
<path d="M2674,1533 L2703.96,1359.57 A176,176 0 0 1 2848.20,1507.90 Z" fill="#a081df"/>
<path d="M2674,1533 L2848.20,1507.90 A176,176 0 0 1 2848.37,1509.11 Z" fill="#3dbdd4"/>
<path d="M2674,1533 L2848.37,1509.11 A176,176 0 0 1 2848.90,1513.38 Z" fill="#4b7fc1"/>
<path d="M2674,1533 L2848.90,1513.38 A176,176 0 0 1 2849.04,1514.60 Z" fill="#52b6be"/>
<path d="M2674,1533 L2849.04,1514.60 A176,176 0 1 1 2534.74,1425.37 Z" fill="#a081df"/>
<path d="M2674,1533 L2534.74,1425.37 A176,176 0 0 1 2663.56,1357.31 Z" fill="#3dbdd4"/>
<path d="M2674,1533 L2663.56,1357.31 A176,176 0 0 1 2666.02,1357.18 Z" fill="#4b7fc1"/>
<path d="M2674,1533 L2666.02,1357.18 A176,176 0 0 1 2670.31,1357.04 Z" fill="#52b6be"/>
<path d="M2674,1533 L2670.31,1357.04 A176,176 0 0 1 2672.16,1357.01 Z" fill="#a081df"/>
<path d="M2674,1533 L2672.16,1357.01 A176,176 0 0 1 2674.00,1357.00 Z" fill="#3dbdd4"/>
<text x="2716.0" y="1290.1" font-size="25" fill="#4b7fc1" text-anchor="start">Android 1.x</text>
<text x="2717.6" y="1314.3" font-size="25" fill="#52b6be" text-anchor="start">Android 6.x</text>
<text x="2790.8" y="1338.0" font-size="25" fill="#a081df" text-anchor="start">Android 7.x</text>
<text x="2825.7" y="1362.2" font-size="25" fill="#3dbdd4" text-anchor="start">Android 8.x</text>
<text x="2851.0" y="1386.5" font-size="25" fill="#4b7fc1" text-anchor="start">Android Mobile</text>
<text x="2869.0" y="1410.1" font-size="25" fill="#52b6be" text-anchor="start">Linux</text>
<text x="2883.7" y="1434.3" font-size="25" fill="#a081df" text-anchor="start">Mac OS X</text>
<text x="2905.7" y="1492.8" font-size="25" fill="#3dbdd4" text-anchor="start">Mac OS X (iPad)</text>
<text x="2909.0" y="1517.0" font-size="25" fill="#4b7fc1" text-anchor="start">Mac OS X (iPhone)</text>
<text x="2910.0" y="1541.2" font-size="25" fill="#52b6be" text-anchor="start">Ubuntu</text>
<text x="2545.9" y="1741.1" font-size="25" fill="#a081df" text-anchor="end">Windows 10</text>
<text x="2487.9" y="1397.1" font-size="25" fill="#3dbdd4" text-anchor="end">Windows 7</text>
<text x="2510.4" y="1372.9" font-size="25" fill="#4b7fc1" text-anchor="end">Windows 8</text>
<text x="2540.0" y="1349.2" font-size="25" fill="#52b6be" text-anchor="end">Windows 8.1</text>
<text x="2630.4" y="1325.0" font-size="25" fill="#a081df" text-anchor="end">Windows Vista</text>
<text x="2632.6" y="1301.4" font-size="25" fill="#3dbdd4" text-anchor="end">Windows XP</text>
</g>
<rect x="536" y="1224.7" width="50" height="27" rx="6" fill="#4b7fc1"/>
<text x="597" y="1247.2" font-size="25" fill="#333">Chrome</text>
<rect x="536" y="1272.7" width="50" height="27" rx="6" fill="#52b6be"/>
<text x="597" y="1295.2" font-size="25" fill="#333">Chrome 26</text>
<rect x="536" y="1320.7" width="50" height="27" rx="6" fill="#a081df"/>
<text x="597" y="1343.2" font-size="25" fill="#333">Chrome 47</text>
<rect x="536" y="1368.7" width="50" height="27" rx="6" fill="#3dbdd4"/>
<text x="597" y="1391.2" font-size="25" fill="#333">Chrome 49</text>
<rect x="536" y="1416.7" width="50" height="27" rx="6" fill="#4b7fc1"/>
<text x="597" y="1439.2" font-size="25" fill="#333">Chrome 51</text>
<rect x="536" y="1464.7" width="50" height="27" rx="6" fill="#52b6be"/>
<text x="597" y="1487.2" font-size="25" fill="#333">Chrome 53</text>
<rect x="536" y="1512.7" width="50" height="27" rx="6" fill="#a081df"/>
<text x="597" y="1535.2" font-size="25" fill="#333">Chrome 54</text>
<rect x="536" y="1560.7" width="50" height="27" rx="6" fill="#3dbdd4"/>
<text x="597" y="1583.2" font-size="25" fill="#333">Chrome 55</text>
<rect x="536" y="1608.7" width="50" height="27" rx="6" fill="#4b7fc1"/>
<text x="597" y="1631.2" font-size="25" fill="#333">Chrome 57</text>
<rect x="536" y="1656.7" width="50" height="27" rx="6" fill="#52b6be"/>
<text x="597" y="1679.2" font-size="25" fill="#333">Chrome 58</text>
<rect x="536" y="1704.7" width="50" height="27" rx="6" fill="#a081df"/>
<text x="597" y="1727.2" font-size="25" fill="#333">Chrome 59</text>
<rect x="536" y="1752.7" width="50" height="27" rx="6" fill="#3dbdd4"/>
<text x="597" y="1775.2" font-size="25" fill="#333">Chrome 61</text>
<rect x="536" y="1800.7" width="50" height="27" rx="6" fill="#4b7fc1"/>
<text x="597" y="1823.2" font-size="25" fill="#333">Chrome 62</text>
<rect x="740.5" y="1224.7" width="50" height="27" rx="6" fill="#52b6be"/>
<text x="801" y="1247.2" font-size="25" fill="#333">Chrome 63</text>
<rect x="740.5" y="1272.7" width="50" height="27" rx="6" fill="#a081df"/>
<text x="801" y="1295.2" font-size="25" fill="#333">Chrome 64</text>
<rect x="740.5" y="1320.7" width="50" height="27" rx="6" fill="#3dbdd4"/>
<text x="801" y="1343.2" font-size="25" fill="#333">Chrome 65</text>
<rect x="740.5" y="1368.7" width="50" height="27" rx="6" fill="#4b7fc1"/>
<text x="801" y="1391.2" font-size="25" fill="#333">Chrome 8</text>
<rect x="740.5" y="1416.7" width="50" height="27" rx="6" fill="#52b6be"/>
<text x="801" y="1439.2" font-size="25" fill="#333">Chrome Mobile</text>
<rect x="740.5" y="1464.7" width="50" height="27" rx="6" fill="#a081df"/>
<text x="801" y="1487.2" font-size="25" fill="#333">Firefox</text>
<rect x="740.5" y="1512.7" width="50" height="27" rx="6" fill="#3dbdd4"/>
<text x="801" y="1535.2" font-size="25" fill="#333">Firefox 42</text>
<rect x="740.5" y="1560.7" width="50" height="27" rx="6" fill="#4b7fc1"/>
<text x="801" y="1583.2" font-size="25" fill="#333">Firefox 45</text>
<rect x="740.5" y="1608.7" width="50" height="27" rx="6" fill="#52b6be"/>
<text x="801" y="1631.2" font-size="25" fill="#333">Firefox 51</text>
<rect x="740.5" y="1656.7" width="50" height="27" rx="6" fill="#a081df"/>
<text x="801" y="1679.2" font-size="25" fill="#333">Firefox 56</text>
<rect x="740.5" y="1704.7" width="50" height="27" rx="6" fill="#3dbdd4"/>
<text x="801" y="1727.2" font-size="25" fill="#333">Firefox 7</text>
<rect x="740.5" y="1752.7" width="50" height="27" rx="6" fill="#4b7fc1"/>
<text x="801" y="1775.2" font-size="25" fill="#333">Internet Explorer 11</text>
<rect x="740.5" y="1800.7" width="50" height="27" rx="6" fill="#52b6be"/>
<text x="801" y="1823.2" font-size="25" fill="#333">Microsoft Edge</text>
<rect x="1032.6" y="1224.7" width="50" height="27" rx="6" fill="#a081df"/>
<text x="1093" y="1247.2" font-size="25" fill="#333">Microsoft Edge (EdgeHTML 16)</text>
<rect x="1032.6" y="1272.7" width="50" height="27" rx="6" fill="#3dbdd4"/>
<text x="1093" y="1295.2" font-size="25" fill="#333">Mobile Safari</text>
<rect x="1032.6" y="1320.7" width="50" height="27" rx="6" fill="#4b7fc1"/>
<text x="1093" y="1343.2" font-size="25" fill="#333">Opera</text>
<rect x="1032.6" y="1368.7" width="50" height="27" rx="6" fill="#52b6be"/>
<text x="1093" y="1391.2" font-size="25" fill="#333">Opera 12</text>
<rect x="1032.6" y="1416.7" width="50" height="27" rx="6" fill="#a081df"/>
<text x="1093" y="1439.2" font-size="25" fill="#333">Safari</text>
<rect x="1032.6" y="1464.7" width="50" height="27" rx="6" fill="#3dbdd4"/>
<text x="1093" y="1487.2" font-size="25" fill="#333">Safari 11</text>
<rect x="1032.6" y="1512.7" width="50" height="27" rx="6" fill="#4b7fc1"/>
<text x="1093" y="1535.2" font-size="25" fill="#333">Safari 9</text>
<text x="1316" y="1255" font-size="36" font-weight="bold" fill="#333" text-anchor="middle">访问用户浏览器</text>
<rect x="1895.5" y="1224.7" width="50" height="27" rx="6" fill="#4b7fc1"/>
<text x="1956" y="1247.2" font-size="25" fill="#333">Android 1.x</text>
<rect x="1895.5" y="1272.7" width="50" height="27" rx="6" fill="#52b6be"/>
<text x="1956" y="1295.2" font-size="25" fill="#333">Android 6.x</text>
<rect x="1895.5" y="1320.7" width="50" height="27" rx="6" fill="#a081df"/>
<text x="1956" y="1343.2" font-size="25" fill="#333">Android 7.x</text>
<rect x="1895.5" y="1368.7" width="50" height="27" rx="6" fill="#3dbdd4"/>
<text x="1956" y="1391.2" font-size="25" fill="#333">Android 8.x</text>
<rect x="1895.5" y="1416.7" width="50" height="27" rx="6" fill="#4b7fc1"/>
<text x="1956" y="1439.2" font-size="25" fill="#333">Android Mobile</text>
<rect x="1895.5" y="1464.7" width="50" height="27" rx="6" fill="#52b6be"/>
<text x="1956" y="1487.2" font-size="25" fill="#333">Linux</text>
<rect x="1895.5" y="1512.7" width="50" height="27" rx="6" fill="#a081df"/>
<text x="1956" y="1535.2" font-size="25" fill="#333">Mac OS X</text>
<rect x="1895.5" y="1560.7" width="50" height="27" rx="6" fill="#3dbdd4"/>
<text x="1956" y="1583.2" font-size="25" fill="#333">Mac OS X (iPad)</text>
<rect x="1895.5" y="1608.7" width="50" height="27" rx="6" fill="#4b7fc1"/>
<text x="1956" y="1631.2" font-size="25" fill="#333">Mac OS X (iPhone)</text>
<rect x="1895.5" y="1656.7" width="50" height="27" rx="6" fill="#52b6be"/>
<text x="1956" y="1679.2" font-size="25" fill="#333">Ubuntu</text>
<rect x="1895.5" y="1704.7" width="50" height="27" rx="6" fill="#a081df"/>
<text x="1956" y="1727.2" font-size="25" fill="#333">Windows 10</text>
<rect x="1895.5" y="1752.7" width="50" height="27" rx="6" fill="#3dbdd4"/>
<text x="1956" y="1775.2" font-size="25" fill="#333">Windows 7</text>
<rect x="1895.5" y="1800.7" width="50" height="27" rx="6" fill="#4b7fc1"/>
<text x="1956" y="1823.2" font-size="25" fill="#333">Windows 8</text>
<rect x="2188.3" y="1224.7" width="50" height="27" rx="6" fill="#52b6be"/>
<text x="2248" y="1247.2" font-size="25" fill="#333">Windows 8.1</text>
<rect x="2188.3" y="1272.7" width="50" height="27" rx="6" fill="#a081df"/>
<text x="2248" y="1295.2" font-size="25" fill="#333">Windows Vista</text>
<rect x="2188.3" y="1320.7" width="50" height="27" rx="6" fill="#3dbdd4"/>
<text x="2248" y="1343.2" font-size="25" fill="#333">Windows XP</text>
<text x="2674" y="1255" font-size="36" font-weight="bold" fill="#333" text-anchor="middle">访问用户操作系统</text>
</svg>
<div class="a" style="left:3039px;top:455px;font-size:28px;line-height:28px;color:#1890ff;-webkit-text-stroke:0.5px #1890ff">了解更多</div>
<div class="a" style="left:1846px;top:520px;width:1340px;height:2px;background:#efefef"></div>
<div class="a" style="left:1846px;top:644px;width:1340px;height:2px;background:#efefef"></div>
<div class="a" style="left:1846px;top:800px;width:1340px;height:2px;background:#efefef"></div>
<div class="a" style="left:1846px;top:956px;width:1340px;height:2px;background:#efefef"></div>
<div class="a" style="left:1846px;top:1152px;width:1340px;height:2px;background:#efefef"></div>
<div class="a" style="left:2516px;top:521px;width:2px;height:631px;background:#efefef"></div>
<div class="a" style="left:1866px;top:540px;width:80px;height:80px;border-radius:50%;background:#d9f7be;color:#3db37e;font-size:28px;line-height:80px;text-align:center">SB</div>
<div class="a" style="left:1968px;top:537px;font-size:28.5px;line-height:30px;font-weight:bold;color:#111">SpringBoot</div>
<div class="a" style="left:1968px;top:584px;font-size:25px;line-height:28px;color:#8c8c8c">Spring Boot 2.1.2</div>
<div class="a" style="left:2538px;top:540px;width:80px;height:80px;border-radius:50%;background:#d9f7be;color:#3db37e;font-size:28px;line-height:80px;text-align:center">SC</div>
<div class="a" style="left:2640px;top:537px;font-size:28.5px;line-height:30px;font-weight:bold;color:#111">SpringCloud</div>
<div class="a" style="left:2640px;top:584px;font-size:25px;line-height:28px;color:#8c8c8c">Spring Cloud Greenwich.RELEASE</div>
<div class="a" style="left:1866px;top:664px;width:80px;height:80px;border-radius:50%;background:#d9f7be;color:#3db37e;font-size:28px;line-height:80px;text-align:center">SCA</div>
<div class="a" style="left:1968px;top:661px;font-size:28.5px;line-height:30px;font-weight:bold;color:#111">Spring Cloud alibaba</div>
<div class="a" style="left:1968px;top:708px;font-size:25px;line-height:28px;color:#8c8c8c">SpringCloudAlibaba2.1.0.RELEASE &amp;</div>
<div class="a" style="left:1968px;top:748px;font-size:25px;line-height:28px;color:#8c8c8c">nacos &amp; seata &amp; Sentinel</div>
<div class="a" style="left:2538px;top:680px;width:80px;height:80px;border-radius:50%;background:#d9f7be;color:#3db37e;font-size:28px;line-height:80px;text-align:center">MP</div>
<div class="a" style="left:2640px;top:677px;font-size:28.5px;line-height:30px;font-weight:bold;color:#111">Mybatis-Plus</div>
<div class="a" style="left:2640px;top:724px;font-size:25px;line-height:28px;color:#8c8c8c">Mybatis-plus 3.2.0：Mybatis 增强组件</div>
<div class="a" style="left:1866px;top:836px;width:80px;height:80px;border-radius:50%;background:#d9f7be;color:#3db37e;font-size:28px;line-height:80px;text-align:center">J</div>
<div class="a" style="left:1968px;top:833px;font-size:28.5px;line-height:30px;font-weight:bold;color:#111">J2cache</div>
<div class="a" style="left:1968px;top:879px;font-size:25px;line-height:28px;color:#8c8c8c">J2cache2.7.8: 二级缓存框架</div>
<div class="a" style="left:2538px;top:820px;width:80px;height:80px;border-radius:50%;background:#d9f7be;color:#3db37e;font-size:28px;line-height:80px;text-align:center">F</div>
<div class="a" style="left:2640px;top:817px;font-size:28.5px;line-height:30px;font-weight:bold;color:#111">文件存储API</div>
<div class="a" style="left:2640px;top:863px;font-size:25px;line-height:28px;color:#8c8c8c">封装文件接口，实现本地存储、阿里云、</div>
<div class="a" style="left:2640px;top:903px;font-size:25px;line-height:28px;color:#8c8c8c">FastDFS存储的配置化</div>
<div class="a" style="left:1866px;top:976px;width:80px;height:80px;border-radius:50%;background:#d9f7be;color:#3db37e;font-size:28px;line-height:80px;text-align:center">M</div>
<div class="a" style="left:1968px;top:972px;font-size:28.5px;line-height:30px;font-weight:bold;color:#111">监控</div>
<div class="a" style="left:1968px;top:1019px;font-size:25px;line-height:28px;color:#8c8c8c">集成SpringBootAdmin、Zipkin、Redis、</div>
<div class="a" style="left:1968px;top:1059px;font-size:25px;line-height:28px;color:#8c8c8c">Mysql、定时任务等监控，对系统进行全方</div>
<div class="a" style="left:1968px;top:1099px;font-size:25px;line-height:28px;color:#8c8c8c">位监控护航</div>
<div class="a" style="left:2538px;top:996px;width:80px;height:80px;border-radius:50%;background:#d9f7be;color:#3db37e;font-size:28px;line-height:80px;text-align:center">C</div>
<div class="a" style="left:2640px;top:993px;font-size:28.5px;line-height:30px;font-weight:bold;color:#111">容器技术</div>
<div class="a" style="left:2640px;top:1039px;font-size:25px;line-height:28px;color:#8c8c8c">虚拟化容器技术，让迁移、部署更加方便快</div>
<div class="a" style="left:2640px;top:1079px;font-size:25px;line-height:28px;color:#8c8c8c">捷</div>
</body></html>
